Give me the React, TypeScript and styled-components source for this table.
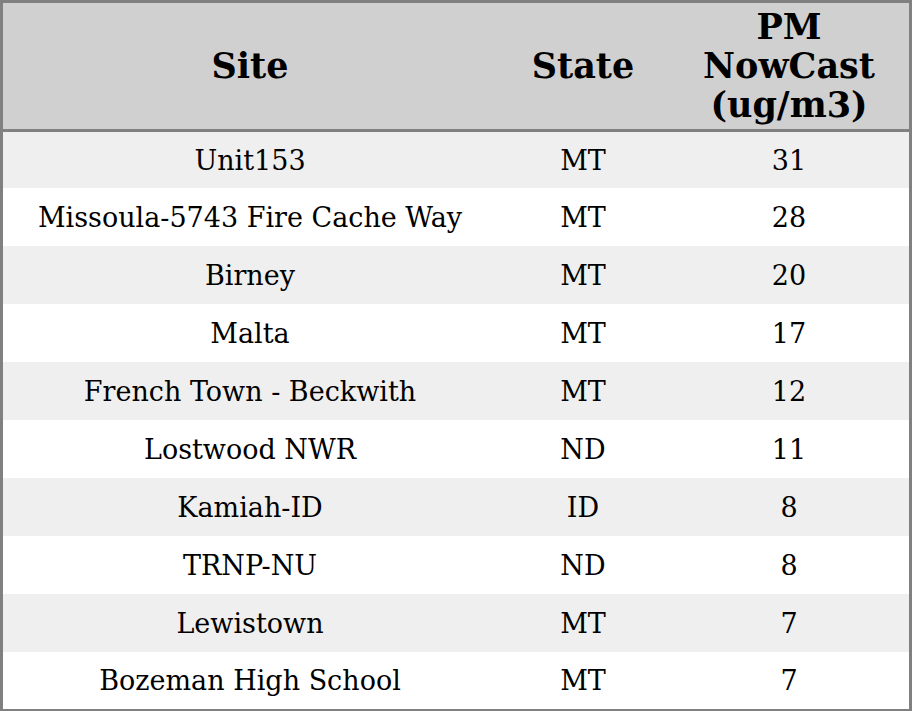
import React from "react";
import styled, { createGlobalStyle } from "styled-components";

const GlobalStyle = createGlobalStyle`
    html, body {
        margin: 0;
        padding: 0;
        background: #ffffff;
    }
`

const StyledTable = styled.table`
    width: 912px;
    border-collapse: separate;
    border-spacing: 0;
    border: 3px solid #808080;
    box-sizing: border-box;
    table-layout: fixed;
    font-family: "DejaVu Serif", "Liberation Serif", serif;
    color: #000000;
`

const StyledHeadCell = styled.th`
    background-color: #d0d0d0;
    border-bottom: 3px solid #808080;
    font-size: 35px;
    line-height: 39px;
    font-weight: 700;
    text-align: center;
    vertical-align: middle;
    padding: 4px 0 5px;
    height: 116px;
`

const StyledRow = styled.tr<{ $shaded: boolean }>`
    background-color: ${(p) => (p.$shaded ? "#efefef" : "#ffffff")};
    height: 58px;
    &:first-child {
        height: 56px;
    }
    &:last-child {
        height: 57px;
    }
`

const StyledCell = styled.td`
    font-size: 27px;
    line-height: 31px;
    text-align: center;
    vertical-align: middle;
    padding: 0;
`

interface Reading {
    site: string;
    state: string;
    pm: number;
}

const readings: Reading[] = [
    { site: "Unit153", state: "MT", pm: 31 },
    { site: "Missoula-5743 Fire Cache Way", state: "MT", pm: 28 },
    { site: "Birney", state: "MT", pm: 20 },
    { site: "Malta", state: "MT", pm: 17 },
    { site: "French Town - Beckwith", state: "MT", pm: 12 },
    { site: "Lostwood NWR", state: "ND", pm: 11 },
    { site: "Kamiah-ID", state: "ID", pm: 8 },
    { site: "TRNP-NU", state: "ND", pm: 8 },
    { site: "Lewistown", state: "MT", pm: 7 },
    { site: "Bozeman High School", state: "MT", pm: 7 },
]

export default function App() {
    return (
        <>
            <GlobalStyle />
            <StyledTable>
                <colgroup>
                    <col style={{ width: "494px" }} />
                    <col style={{ width: "172px" }} />
                    <col style={{ width: "240px" }} />
                </colgroup>
                <thead>
                    <tr>
                        <StyledHeadCell>Site</StyledHeadCell>
                        <StyledHeadCell>State</StyledHeadCell>
                        <StyledHeadCell>PM<br />NowCast<br />(ug/m3)</StyledHeadCell>
                    </tr>
                </thead>
                <tbody>
                    {readings.map((r, i) => (
                        <StyledRow key={r.site} $shaded={i % 2 === 0}>
                            <StyledCell>{r.site}</StyledCell>
                            <StyledCell>{r.state}</StyledCell>
                            <StyledCell>{r.pm}</StyledCell>
                        </StyledRow>
                    ))}
                </tbody>
            </StyledTable>
        </>
    );
}
